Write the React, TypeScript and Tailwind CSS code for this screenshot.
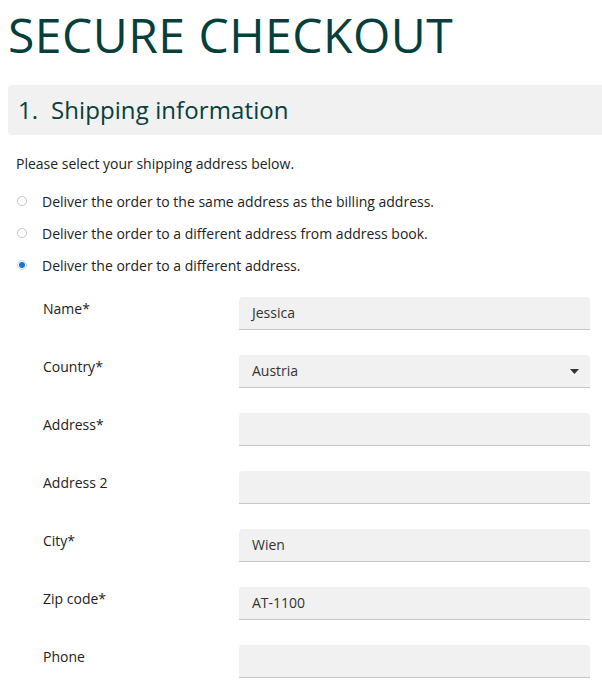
import React from 'react';

const fields = [
  { label: 'Name*', value: 'Jessica' },
  { label: 'Country*', value: 'Austria', select: true },
  { label: 'Address*', value: '' },
  { label: 'Address 2', value: '' },
  { label: 'City*', value: 'Wien' },
  { label: 'Zip code*', value: 'AT-1100' },
  { label: 'Phone', value: '' },
];

const options = [
  { text: 'Deliver the order to the same address as the billing address.', checked: false },
  { text: 'Deliver the order to a different address from address book.', checked: false },
  { text: 'Deliver the order to a different address.', checked: true },
];

export default function App() {
  return (
    <div className="min-h-[688px] bg-white pl-2 font-['Open_Sans',sans-serif] text-[#222]">
      {/* Page title */}
      <h1 className="pt-[7px] text-[48px] leading-[56px] font-normal tracking-[0.5px] text-[#06403c]">SECURE CHECKOUT</h1>

      {/* Step header */}
      <div className="mt-[22px] flex h-[50px] items-center rounded-l bg-[#f1f1f1] pl-[10px]">
        <h2 className="text-[24px] tracking-[0.1px] text-[#06403c]">1.&nbsp; Shipping information</h2>
      </div>

      <div className="pr-3">
        <p className="mt-[19px] pl-2 text-[14px] leading-5">Please select your shipping address below.</p>

        {/* Address options */}
        <div className="mt-[17px] flex flex-col gap-3 pl-[9px]">
          {options.map((o) => (
            <div key={o.text} className="flex h-5 items-center gap-[15px]">
              <span
                className={
                  'flex h-[10px] w-[10px] items-center justify-center rounded-full border ' +
                  (o.checked ? 'border-[#c9d8ef]' : 'border-[#c4c4c4]')
                }
              >
                {o.checked && <span className="h-[6px] w-[6px] rounded-full bg-[#1a73d9]" />}
              </span>
              <span className="text-[14px]">{o.text}</span>
            </div>
          ))}
        </div>

        {/* Shipping form */}
        <div className="mt-[22px] flex flex-col gap-[25px] pl-[35px]">
          {fields.map((f) => (
            <div key={f.label} className="flex">
              <label className="w-[196px] pt-[2px] text-[14px] leading-5">{f.label}</label>
              <div className="relative flex h-[33px] flex-1 items-center rounded-t bg-[#f1f1f1] border-b border-[#c6c6c6] px-[13px] pb-[2px] text-[14px] text-[#333]">
                {f.value}
                {f.select && (
                  <svg className="absolute right-[11px] top-[14px]" width="9" height="5" viewBox="0 0 9 5">
                    <path d="M0 0h9L4.5 5z" fill="#333" />
                  </svg>
                )}
              </div>
            </div>
          ))}
        </div>
      </div>
    </div>
  );
}
